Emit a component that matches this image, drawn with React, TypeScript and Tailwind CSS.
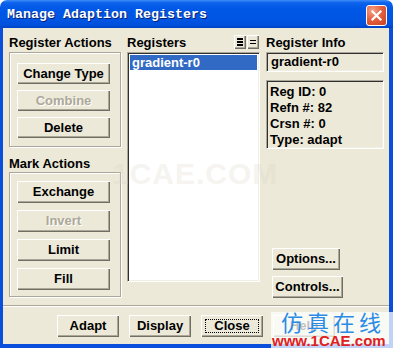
import React from "react";

const raised =
  "bg-[#ECE9D8] shadow-[inset_1px_1px_0_#ffffff,inset_-1px_-1px_0_#716f64,inset_-2px_-2px_0_#aca899]";
const sunken =
  "border border-t-[#aca899] border-l-[#aca899] border-b-white border-r-white shadow-[inset_1px_1px_0_#303030,inset_-1px_-1px_0_#f1efe2]";
const etched =
  "border border-[#aca899] shadow-[inset_1px_1px_0_#ffffff,1px_1px_0_#ffffff]";

function Btn({
  children,
  className = "",
  disabled = false,
  focused = false,
}: {
  children: React.ReactNode;
  className?: string;
  disabled?: boolean;
  focused?: boolean;
}) {
  return (
    <div className={`${raised} flex items-center justify-center shrink-0 ${className}`}>
      {focused ? (
        <div className="self-stretch flex-1 m-[4px] border border-dotted border-black flex items-center justify-center">
          {children}
        </div>
      ) : disabled ? (
        <span className="text-[#aca899] [text-shadow:1px_1px_0_#ffffff]">{children}</span>
      ) : (
        <span>{children}</span>
      )}
    </div>
  );
}

export default function App() {
  return (
    <div
      className="relative w-[393px] h-[348px] bg-white overflow-hidden text-black font-bold text-[13px] leading-[16px]"
      style={{ fontFamily: '"Liberation Sans", Arial, sans-serif' }}
    >
      {/* Title bar */}
      <div className="h-[28px] rounded-t-[7px] bg-[linear-gradient(to_bottom,#3d8cf7_0%,#0d62ec_10%,#0058e6_30%,#0055e3_70%,#0050da_90%,#0042c4_100%)] flex items-center pl-[7px] pr-[6px]">
        <span
          className="text-white text-[13.33px] font-bold [text-shadow:1px_1px_0_#0a1f70] flex-1 pt-[1px]"
          style={{ fontFamily: '"Liberation Mono", "Courier New", monospace' }}
        >
          Manage Adaption Registers
        </span>
        <div className="w-[21px] h-[21px] rounded-[3px] border border-white bg-[radial-gradient(circle_at_30%_25%,#f3a48c_0%,#e5613f_45%,#c9401f_100%)] flex items-center justify-center mt-[2px]">
          <svg width="13" height="13" viewBox="0 0 13 13">
            <path d="M2.5 2.5 L10.5 10.5 M10.5 2.5 L2.5 10.5" stroke="#fff" strokeWidth="2.2" strokeLinecap="square" />
          </svg>
        </div>
      </div>

      {/* Frame + client */}
      <div className="h-[320px] bg-[#0a4fdc] pl-[3px] pr-[4px] pb-[4px] flex">
        <div className="flex-1 bg-[#ECE9D8] flex flex-col">
          {/* Top section */}
          <div className="h-[277px] flex pt-[7px] pl-[6px]">
            {/* Left column */}
            <div className="w-[112px] flex flex-col">
              <div className="h-[16px] whitespace-nowrap">Register Actions</div>
              <div className={`mt-[1px] h-[95px] ${etched} flex flex-col pt-[10px] pl-[7px] gap-[6px]`}>
                <Btn className="w-[93px] h-[21px]">Change Type</Btn>
                <Btn className="w-[93px] h-[21px]" disabled>Combine</Btn>
                <Btn className="w-[93px] h-[21px]">Delete</Btn>
              </div>
              <div className="mt-[9px] h-[16px] whitespace-nowrap">Mark Actions</div>
              <div className={`h-[125px] ${etched} flex flex-col pt-[8px] pl-[7px] gap-[7px]`}>
                <Btn className="w-[93px] h-[22px]">Exchange</Btn>
                <Btn className="w-[93px] h-[22px]" disabled>Invert</Btn>
                <Btn className="w-[93px] h-[22px]">Limit</Btn>
                <Btn className="w-[93px] h-[22px]">Fill</Btn>
              </div>
            </div>

            {/* Middle column */}
            <div className="w-[133px] ml-[6px] flex flex-col">
              <div className="h-[17px] flex items-start">
                <span className="flex-1">Registers</span>
                <div className={`${raised} w-[12px] h-[14px] flex flex-col items-center justify-center gap-[1px]`}>
                  <div className="w-[6px] h-[2px] bg-black" />
                  <div className="w-[6px] h-[2px] bg-black" />
                  <div className="w-[6px] h-[2px] bg-black" />
                </div>
                <div className={`${raised} ml-[1px] mr-[1px] w-[12px] h-[14px] flex flex-col items-center justify-center gap-[2px]`}>
                  <div className="w-[6px] h-[1px] bg-black" />
                  <div className="w-[6px] h-[1px] bg-black" />
                </div>
              </div>
              <div className={`h-[230px] bg-white ${sunken} p-[2px]`}>
                <div className="h-[15px] bg-[#316ac5] text-white pl-[2px] leading-[15px]">gradient-r0</div>
              </div>
            </div>

            {/* Right column */}
            <div className="w-[118px] ml-[6px] flex flex-col">
              <div className="h-[17px] whitespace-nowrap">Register Info</div>
              <div className={`h-[20px] ${sunken} pl-[4px] flex items-center`}>gradient-r0</div>
              <div className={`mt-[8px] h-[69px] ${sunken} pl-[3px] pt-[3px]`}>
                <div>Reg ID: 0</div>
                <div>Refn #: 82</div>
                <div>Crsn #: 0</div>
                <div>Type: adapt</div>
              </div>
              <Btn className="ml-[6px] mt-[99px] w-[68px] h-[22px]">Options...</Btn>
              <Btn className="ml-[6px] mt-[6px] w-[71px] h-[22px]">Controls...</Btn>
            </div>
          </div>

          {/* Separator */}
          <div className="h-[1px] bg-[#aca899]" />
          <div className="h-[1px] bg-white" />

          {/* Bottom buttons */}
          <div className="flex pl-[54px] pt-[8px] gap-[10px]">
            <Btn className="w-[62px] h-[22px]">Adapt</Btn>
            <Btn className="w-[62px] h-[22px]">Display</Btn>
            <Btn className="w-[62px] h-[22px]" focused>Close</Btn>
            <Btn className="w-[62px] h-[22px]">Help</Btn>
          </div>
        </div>
      </div>

      {/* faint center watermark */}
      <div className="absolute left-[112px] top-[158px] text-[30px] leading-[32px] font-bold text-[#d8d5c6] opacity-25 pointer-events-none tracking-[1px]">
        1CAE.COM
      </div>

      {/* corner watermark */}
      <div className="absolute left-[271px] top-[312px] w-[122px] h-[36px] bg-white/75 pointer-events-none">
        <div
          className="absolute left-[10px] top-[-3px] text-[22px] leading-[24px] font-normal text-[#2a8ce6] tracking-[4px] whitespace-nowrap"
          style={{ fontFamily: '"Noto Sans CJK SC", sans-serif' }}
        >
          仿真在线
        </div>
        <div className="absolute left-[1px] top-[21px] text-[15px] leading-[15px] font-bold text-[#e0201e] whitespace-nowrap">
          www.1CAE.com
        </div>
      </div>
    </div>
  );
}
